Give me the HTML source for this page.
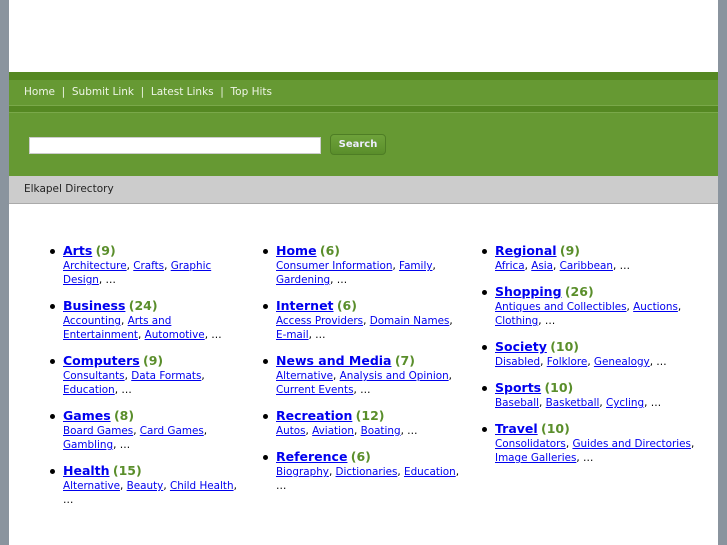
<!DOCTYPE html><html><head><style>
body{margin:0;width:727px;height:545px;overflow:hidden;background:#8a949e;font-family:"DejaVu Sans",Verdana,sans-serif;}
#w{position:absolute;left:9px;top:0;width:709px;height:545px;background:#fff;}
#nav{position:absolute;top:72px;left:0;width:709px;height:104px;background:#669933;}
.dk{position:absolute;left:0;width:709px;background:#558822;}
#links{position:absolute;top:86px;left:15px;color:#eef5e6;font-size:10.5px;white-space:pre;}
#inp{position:absolute;left:20px;top:137px;width:290px;height:15px;background:#fff;border:1px solid #ccc;}
#btn{position:absolute;left:321px;top:134px;width:54px;height:19px;border:1px solid #4e7d25;border-radius:4px;background:linear-gradient(#6ea23a,#5a8e2b);color:#eef;font-size:10px;font-weight:bold;text-align:center;line-height:19px;}
#bc{position:absolute;top:176px;left:0;width:709px;height:27px;background:#cccccc;border-bottom:1px solid #aaa;font-size:10.5px;line-height:27px;text-indent:15px;color:#222;}
.col{position:absolute;top:244px;width:200px;font-size:10.4px;line-height:14px;}
.col ul{margin:0;padding:0 0 0 14px;list-style:none;}
.col li{margin-bottom:12px;position:relative;}
.col li:before{content:"";position:absolute;left:-13px;top:5px;width:5px;height:5px;border-radius:50%;background:#000;}
.col a{color:#0000ee;text-decoration:underline;}
.h{font-size:12.5px;font-weight:bold;line-height:13px;}
.n{color:#5a8e2b;font-size:12.5px;font-weight:bold;line-height:13px;}
</style></head><body><div id="w">
<div id="nav"><div class="dk" style="top:0;height:8px"></div><div class="dk" style="top:33px;height:6px;border-top:1px solid #7aa84a;border-bottom:1px solid #7aa84a"></div></div>
<div id="links">Home  |  Submit Link  |  Latest Links  |  Top Hits</div>
<div id="inp"></div><div id="btn">Search</div>
<div id="bc">Elkapel Directory</div>
<div class="col" style="left:40px;width:192px"><ul>
<li><a class="h">Arts</a> <span class="n">(9)</span><br><a>Architecture</a>, <a>Crafts</a>, <a>Graphic Design</a>, …</li>
<li><a class="h">Business</a> <span class="n">(24)</span><br><a>Accounting</a>, <a>Arts and Entertainment</a>, <a>Automotive</a>, …</li>
<li><a class="h">Computers</a> <span class="n">(9)</span><br><a>Consultants</a>, <a>Data Formats</a>, <a>Education</a>, …</li>
<li><a class="h">Games</a> <span class="n">(8)</span><br><a>Board Games</a>, <a>Card Games</a>, <a>Gambling</a>, …</li>
<li><a class="h">Health</a> <span class="n">(15)</span><br><a>Alternative</a>, <a>Beauty</a>, <a>Child Health</a>, …</li>
</ul></div>
<div class="col" style="left:253px;width:198px"><ul>
<li><a class="h">Home</a> <span class="n">(6)</span><br><a>Consumer Information</a>, <a>Family</a>, <a>Gardening</a>, …</li>
<li><a class="h">Internet</a> <span class="n">(6)</span><br><a>Access Providers</a>, <a>Domain Names</a>, <a>E-mail</a>, …</li>
<li><a class="h">News and Media</a> <span class="n">(7)</span><br><a>Alternative</a>, <a>Analysis and Opinion</a>, <a>Current Events</a>, …</li>
<li><a class="h">Recreation</a> <span class="n">(12)</span><br><a>Autos</a>, <a>Aviation</a>, <a>Boating</a>, …</li>
<li><a class="h">Reference</a> <span class="n">(6)</span><br><a>Biography</a>, <a>Dictionaries</a>, <a>Education</a>, …</li>
</ul></div>
<div class="col" style="left:472px;width:220px"><ul>
<li><a class="h">Regional</a> <span class="n">(9)</span><br><a>Africa</a>, <a>Asia</a>, <a>Caribbean</a>, …</li>
<li><a class="h">Shopping</a> <span class="n">(26)</span><br><a>Antiques and Collectibles</a>, <a>Auctions</a>, <a>Clothing</a>, …</li>
<li><a class="h">Society</a> <span class="n">(10)</span><br><a>Disabled</a>, <a>Folklore</a>, <a>Genealogy</a>, …</li>
<li><a class="h">Sports</a> <span class="n">(10)</span><br><a>Baseball</a>, <a>Basketball</a>, <a>Cycling</a>, …</li>
<li><a class="h">Travel</a> <span class="n">(10)</span><br><a>Consolidators</a>, <a>Guides and Directories</a>, <a>Image Galleries</a>, …</li>
</ul></div>
</div></body></html>
